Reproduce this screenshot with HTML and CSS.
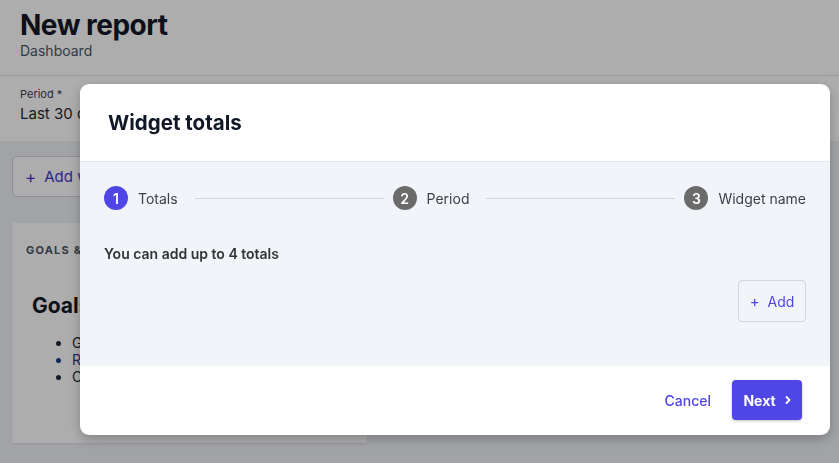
FILE: index.html
```html
<!DOCTYPE html>
<html lang="en">
<head>
<meta charset="utf-8">
<title>New report</title>
<link rel="stylesheet" href="styles.css">
</head>
<body>
<div class="page">
  <header class="page-header">
    <h1 class="page-title">New report</h1>
    <div class="page-sub">Dashboard</div>
  </header>
  <section class="filters">
    <div class="field-label">Period *</div>
    <div class="field-value">Last 30 days</div>
  </section>
  <main class="content">
    <button class="add-widget"><span class="plus">+</span> Add widget</button>
    <div class="card">
      <div class="card-label">GOALS &amp; KPI</div>
      <div class="card-body">
        <h2 class="card-title">Goals</h2>
        <ul class="card-list">
          <li>Grow revenue</li>
          <li class="link">Reduce churn</li>
          <li>Close deals</li>
        </ul>
      </div>
    </div>
  </main>
</div>

<div class="overlay">
  <div class="dialog">
    <div class="dialog-header">
      <h2 class="dialog-title">Widget totals</h2>
    </div>
    <div class="dialog-body">
      <div class="stepper">
        <div class="step active"><span class="step-num">1</span><span class="step-label">Totals</span></div>
        <div class="step-line"></div>
        <div class="step"><span class="step-num">2</span><span class="step-label">Period</span></div>
        <div class="step-line"></div>
        <div class="step"><span class="step-num">3</span><span class="step-label">Widget name</span></div>
      </div>
      <p class="hint">You can add up to 4 totals</p>
      <div class="add-row">
        <button class="btn-add"><span class="plus">+</span> Add</button>
      </div>
    </div>
    <div class="dialog-footer">
      <button class="btn-cancel">Cancel</button>
      <button class="btn-next">Next
        <svg class="chev" width="8" height="10" viewBox="0 0 8 10"><path d="M2.5 2 L5.5 5 L2.5 8" fill="none" stroke="#fff" stroke-width="1.8" stroke-linecap="round" stroke-linejoin="round"/></svg>
      </button>
    </div>
  </div>
</div>
</body>
</html>
```
FILE: styles.css
```css
* { box-sizing: border-box; }
html, body { margin: 0; padding: 0; }
body {
  font-family: Inter, "Noto Sans", "Liberation Sans", sans-serif;
  background: #eff1f6;
  color: #111827;
  width: 839px;
  height: 463px;
  overflow: hidden;
}
button { font-family: inherit; cursor: pointer; }

.page-header {
  background: #fff;
  padding: 10px 20px 14px;
  border-bottom: 1px solid #e0e2e6;
}
.page-title {
  margin: 0;
  font-size: 28px;
  line-height: 31px;
  font-weight: 700;
  letter-spacing: -0.5px;
  color: #111827;
}
.page-sub {
  font-size: 14px;
  line-height: 20px;
  color: #4b5563;
}
.filters {
  background: #fff;
  padding: 10px 20px 0;
  height: 65px;
}
.field-label {
  font-size: 11px;
  line-height: 16px;
  color: #374151;
}
.field-value {
  font-size: 15px;
  line-height: 24px;
  color: #1f2937;
}
.content {
  padding: 15px 12px;
}
.add-widget {
  height: 41px;
  padding: 0 16px 0 12px;
  border: 1px solid #d1d5db;
  border-radius: 5px;
  background: #fff;
  color: #4338ca;
  font-size: 15px;
  display: flex;
  align-items: center;
  gap: 8px;
}
.add-widget .plus { font-size: 17px; }
.card {
  margin-top: 26px;
  width: 355px;
  height: 220px;
  background: #fff;
  box-shadow: 0 1px 2px rgba(0,0,0,0.08);
}
.card-label {
  padding: 20px 14px 0;
  font-size: 11px;
  font-weight: 700;
  letter-spacing: 1.2px;
  color: #4b5563;
}
.card-body { padding: 36px 20px 0; }
.card-title {
  margin: 0;
  font-size: 21px;
  font-weight: 700;
  color: #111827;
}
.card-list {
  margin: 16px 0 0;
  padding-left: 40px;
  font-size: 14px;
  line-height: 17px;
  color: #1f2937;
}
.card-list .link { color: #1e3a8a; }

/* Modal */
.overlay {
  position: fixed;
  inset: 0;
  background: rgba(0,0,0,0.32);
}
.dialog {
  position: absolute;
  left: 80px;
  top: 84px;
  width: 750px;
  height: 351px;
  background: #fff;
  border-radius: 9px;
  overflow: hidden;
  box-shadow: 0 4px 12px rgba(0,0,0,0.25);
  display: flex;
  flex-direction: column;
}
.dialog-header {
  height: 78px;
  padding: 0 28px;
  display: flex;
  align-items: center;
  border-bottom: 1px solid #e2e5ea;
  flex: none;
}
.dialog-title {
  margin: 0;
  font-size: 20.5px;
  font-weight: 700;
  color: #111827;
}
.dialog-body {
  background: #f1f4f9;
  padding: 24px 24px 0;
  height: 204px;
  flex: none;
}
.stepper {
  display: flex;
  align-items: center;
  height: 24px;
}
.step {
  display: flex;
  align-items: center;
  flex: none;
}
.step-num {
  width: 24px;
  height: 24px;
  border-radius: 50%;
  background: #6b6b6b;
  color: #fff;
  font-size: 14px;
  font-weight: 600;
  display: flex;
  align-items: center;
  justify-content: center;
}
.step.active .step-num { background: #4f46e5; }
.step-label {
  margin-left: 10px;
  font-size: 14px;
  color: #3f3f46;
}
.step-line {
  flex: 1;
  height: 1px;
  background: #d1d5db;
  margin: 0 9px 0 17px;
}
.hint {
  margin: 35px 0 0;
  font-size: 14px;
  line-height: 17px;
  font-weight: 600;
  color: #333;
}
.add-row {
  display: flex;
  justify-content: flex-end;
  margin-top: 18px;
}
.btn-add {
  width: 68px;
  height: 42px;
  border: 1px solid #d1d5db;
  border-radius: 4px;
  background: #f1f4f9;
  color: #4f46e5;
  font-size: 14px;
  display: flex;
  align-items: center;
  justify-content: center;
  gap: 8px;
  padding: 0;
}
.btn-add .plus { font-size: 15px; }
.dialog-footer {
  flex: 1;
  display: flex;
  align-items: center;
  justify-content: flex-end;
  padding: 0 28px 1px;
  gap: 21px;
}
.btn-cancel {
  border: 0;
  background: none;
  padding: 0;
  color: #4f46e5;
  font-size: 14px;
  font-weight: 500;
}
.btn-next {
  width: 70px;
  height: 40px;
  border: 0;
  border-radius: 4px;
  background: #4f46e5;
  color: #fff;
  font-size: 14px;
  font-weight: 700;
  display: flex;
  align-items: center;
  justify-content: center;
  gap: 8px;
  padding: 0 0 0 1px;
  box-shadow: 0 1px 3px rgba(0,0,0,0.25);
}
.chev { display: block; }
```
